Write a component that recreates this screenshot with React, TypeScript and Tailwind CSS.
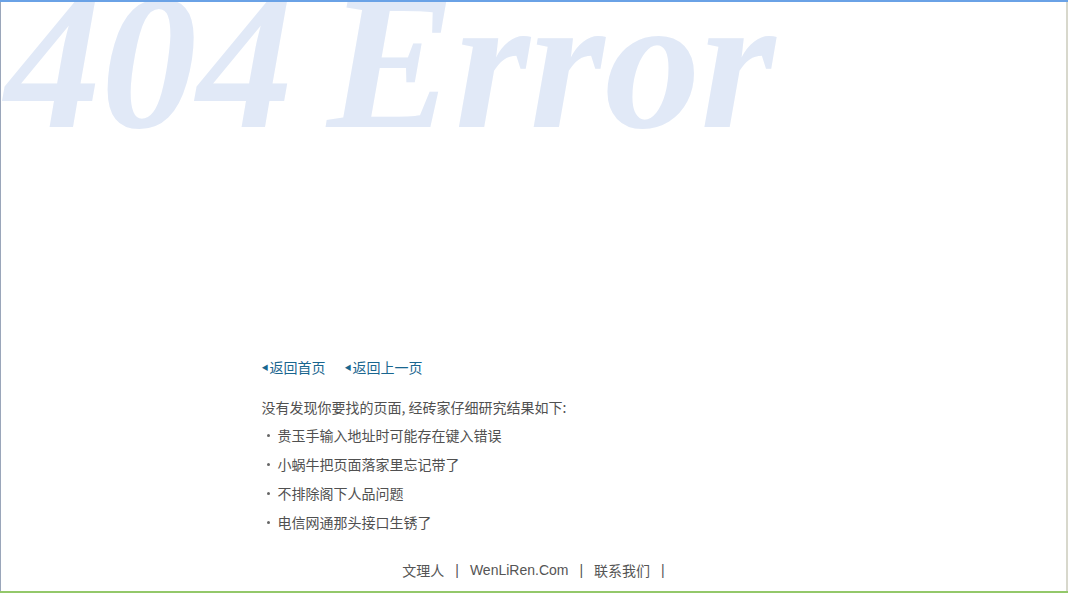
const reasons = [
  "贵玉手输入地址时可能存在键入错误",
  "小蜗牛把页面落家里忘记带了",
  "不排除阁下人品问题",
  "电信网通那头接口生锈了",
];

const cjk = "font-['Noto_Sans_CJK_SC','Noto_Sans',sans-serif]";

export default function App() {
  return (
    <div className="flex h-[593px] w-[1068px] flex-col overflow-hidden bg-white">
      {/* window chrome strips seen in the screenshot */}
      <div className="h-[2px] bg-[#6aa2e6]" />
      <div className="flex flex-1 overflow-hidden">
        <div className="w-px bg-[#9aa6ba]" />
        <div className="flex flex-1 flex-col overflow-hidden">
          <div className="h-[354px] overflow-hidden">
            <h1 className="-mt-[35px] ml-[4px] whitespace-nowrap font-['Liberation_Serif',serif] text-[192px] font-bold italic leading-none text-[#e1e9f7] [word-spacing:-14px]">
              404 Error
            </h1>
          </div>

          <div className={`mx-auto w-[544px] text-[14px] ${cjk}`}>
            <div className="flex gap-[19px] leading-[22px] text-[#19668f]">
              <a href="#" className="flex items-center">
                <span className="mr-px text-[7px]">◀</span>返回首页
              </a>
              <a href="#" className="flex items-center">
                <span className="mr-px text-[7px]">◀</span>返回上一页
              </a>
            </div>

            <p className="mt-[18px] leading-[22px] text-[#505050]">
              没有发现你要找的页面, 经砖家仔细研究结果如下:
            </p>

            <ul className="mt-[3px] flex flex-col text-[#505050]">
              {reasons.map((r) => (
                <li key={r} className="flex h-[29px] items-center">
                  <span className="ml-[5px] mr-[8px] h-[3px] w-[3px] rounded-full bg-[#666]" />
                  {r}
                </li>
              ))}
            </ul>
          </div>

          <div className={`mt-auto mb-[10px] flex justify-center gap-[11px] text-[14px] leading-[22px] text-[#555] ${cjk}`}>
            <span>文理人</span>
            <span className="font-['Liberation_Sans',sans-serif]">|</span>
            <span className="font-['Liberation_Sans',sans-serif]">WenLiRen.Com</span>
            <span className="font-['Liberation_Sans',sans-serif]">|</span>
            <span>联系我们</span>
            <span className="font-['Liberation_Sans',sans-serif]">|</span>
          </div>
        </div>
        <div className="w-[2px] bg-[#d8d8cc]" />
      </div>
      <div className="h-[2px] bg-[#93c86a]" />
    </div>
  );
}
